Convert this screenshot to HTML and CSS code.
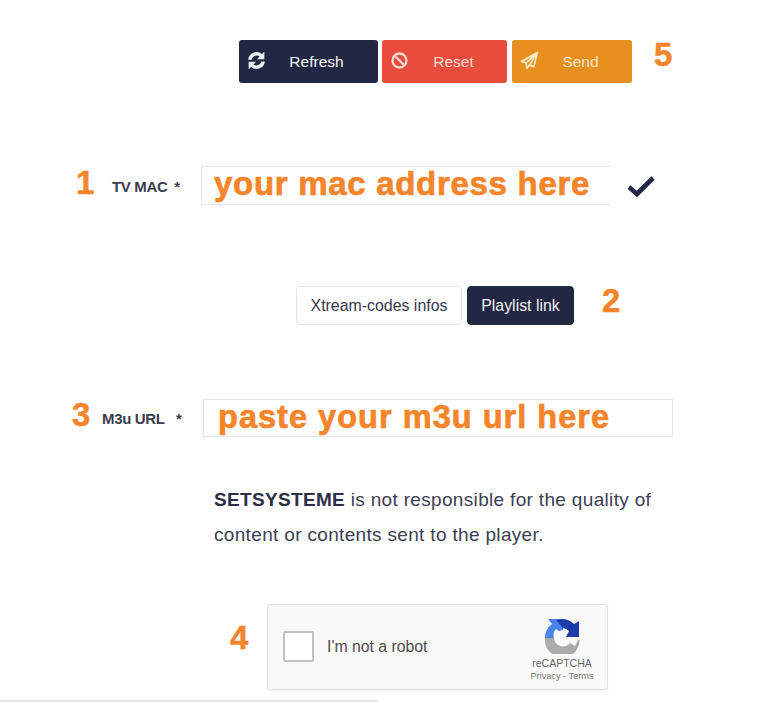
FILE: index.html
```html
<!DOCTYPE html>
<html lang="en">
<head>
    <meta charset="UTF-8">
    <meta name="viewport" content="width=device-width, initial-scale=1.0">
    <title>Upload playlist</title>
    <link rel="stylesheet" href="styles.css">
</head>
<body>
    <div class="page">
        <div class="actions">
            <button class="action action-refresh">
                <svg class="action-icon" viewBox="0 0 24 24"><path d="M2.5 11a9.5 9.5 0 0 1 15.6-6.3L21 2v8.5h-8.5l3-3A5.6 5.6 0 0 0 6.6 11zM21.5 13a9.5 9.5 0 0 1-15.6 6.3L3 22v-8.5h8.5l-3 3a5.6 5.6 0 0 0 8.9-3.5z" fill="#f1f1f4"/></svg>
                <span class="action-text">Refresh</span>
            </button>
            <button class="action action-reset">
                <svg class="action-icon" viewBox="0 0 24 24"><circle cx="12" cy="12" r="8" fill="none" stroke="#f8d9d2" stroke-width="2.6"/><path d="M6.5 6.5l11 11" stroke="#f8d9d2" stroke-width="2.6"/></svg>
                <span class="action-text">Reset</span>
            </button>
            <button class="action action-send">
                <svg class="action-icon" viewBox="0 0 24 24"><path d="M21 3L3 13l5 2 1 6 3-4 5 2zM8 15l13-12-9 14" fill="none" stroke="#fbe6c4" stroke-width="2" stroke-linejoin="round"/></svg>
                <span class="action-text">Send</span>
            </button>
            <span class="step step-five">5</span>
        </div>

        <div class="field field-mac">
            <span class="step step-one">1</span>
            <label class="field-label label-mac">TV MAC <span class="star-mac">*</span></label>
            <div class="fake-input input-mac">your mac address here</div>
            <svg class="check" viewBox="0 0 30 24"><path d="M3 13l8 7L27 4" fill="none" stroke="#222743" stroke-width="4.6"/></svg>
        </div>

        <div class="tabs">
            <button class="tab">Xtream-codes infos</button>
            <button class="tab tab-active">Playlist link</button>
            <span class="step step-two">2</span>
        </div>

        <div class="field field-url">
            <span class="step step-three">3</span>
            <label class="field-label label-url">M3u URL <span class="star">*</span></label>
            <div class="fake-input input-url">paste your m3u url here</div>
        </div>

        <p class="notice"><strong>SETSYSTEME</strong> is not responsible for the quality of content or contents sent to the player.</p>

        <div class="captcha-row">
            <span class="step step-four">4</span>
            <div class="captcha">
                <span class="captcha-box"></span>
                <span class="captcha-text">I'm not a robot</span>
                <div class="captcha-brand">
                    <svg class="captcha-logo" viewBox="0 0 36 36">
                        <path d="M6 34A17 17 0 0 1 1 20h9a9 9 0 0 0 16 5l5 3 3-6h1.500A17 17 0 0 1 6 34z" fill="#ababab"/>
                        <path d="M1 20A17 17 0 0 1 8 6L4 1h15v11l-4 1-3-2a9 9 0 0 0-2 9z" fill="#4a84e8"/>
                        <path d="M12 2L19 1a17 17 0 0 1 11 5l5-3v16H22l3-6a9 9 0 0 0-6-3z" fill="#1c3aa9"/>
                    </svg>
                    <span class="captcha-name">reCAPTCHA</span>
                    <span class="captcha-links">Privacy - Terms</span>
                </div>
            </div>
        </div>

        <div class="bottom-line"></div>
    </div>
</body>
</html>
```

FILE: styles.css
```css
* {
    box-sizing: border-box;
}

body {
    margin: 0;
    background-color: #fff;
    font-family: "Liberation Sans", Arial, sans-serif;
    color: #33374d;
}

.page {
    width: 780px;
    height: 702px;
    overflow: hidden;
    padding-top: 40px;
}

.step {
    font-size: 33px;
    line-height: 33px;
    font-weight: bold;
    color: #f5852b;
    -webkit-text-stroke: 0.5px #f5852b;
}

.actions {
    display: flex;
    height: 43px;
    margin-left: 239px;
}

.action {
    display: flex;
    align-items: center;
    height: 43px;
    padding: 0 0 0 7px;
    border: none;
    border-radius: 3px;
    font-family: inherit;
    font-size: 15.5px;
    color: #f4f4f6;
}

.action-icon {
    width: 21px;
    height: 21px;
    margin-top: -3px;
    flex: none;
}

.action-text {
    flex: 1;
    text-align: center;
}

.action-refresh {
    width: 139px;
    margin-right: 4px;
    background-color: #222743;
}

.action-refresh .action-text {
    padding-right: 12px;
}

.action-reset {
    width: 125px;
    margin-right: 5px;
    background-color: #e84c3d;
    color: #f9dcd5;
}

.action-reset .action-text {
    padding-right: 10px;
}

.action-send {
    width: 120px;
    background-color: #e78f1f;
    color: #fbe6c4;
}

.action-send .action-text {
    padding-right: 11px;
}

.step-five {
    margin: -2px 0 0 22px;
}

.field {
    display: flex;
    align-items: center;
}

.field-mac {
    height: 39px;
    margin-top: 83px;
    padding-left: 76px;
}

.step-one {
    width: 36px;
    margin-top: -6px;
}

.field-label {
    font-size: 15px;
    font-weight: bold;
    letter-spacing: -0.35px;
    color: #3a3d4d;
}

.label-mac {
    width: 89px;
    margin-top: 1px;
}

.star-mac {
    margin-left: 3px;
}

.fake-input {
    display: flex;
    align-items: center;
    border: 1px solid #e6e6e8;
    font-weight: bold;
    color: #f5852b;
    -webkit-text-stroke: 0.7px #f5852b;
}

.input-mac {
    width: 409px;
    height: 39px;
    padding: 0 0 3px 12px;
    border-right: none;
    font-size: 33px;
    letter-spacing: 0.7px;
}

.check {
    width: 30px;
    height: 24px;
    margin: 1px 0 0 16px;
}

.tabs {
    display: flex;
    height: 39px;
    margin-top: 81px;
    margin-left: 296px;
}

.tab {
    width: 166px;
    height: 39px;
    padding: 0;
    border: 1px solid #e4e4e8;
    border-radius: 4px;
    background-color: #fff;
    font-family: inherit;
    font-size: 15.9px;
    color: #33374d;
}

.tab-active {
    width: 107px;
    margin-left: 5px;
    border-color: #222743;
    background-color: #222743;
    color: #f1f1f4;
}

.step-two {
    margin: -2px 0 0 28px;
}

.field-url {
    height: 38px;
    margin-top: 74px;
    padding-left: 72px;
}

.step-three {
    width: 30px;
    margin-top: -8px;
}

.label-url {
    width: 101px;
}

.star {
    margin-left: 8px;
}

.input-url {
    width: 470px;
    height: 38px;
    padding: 0 0 2px 14px;
    font-size: 32.5px;
    letter-spacing: 1.03px;
}

.notice {
    width: 445px;
    margin: 45px 0 0 214px;
    font-size: 19px;
    letter-spacing: 0.33px;
    line-height: 35px;
    color: #3c4054;
}

.notice strong {
    color: #2a2e47;
}

.captcha-row {
    display: flex;
    margin-top: 52px;
    margin-left: 230px;
}

.step-four {
    width: 37px;
    margin-top: 17px;
}

.captcha {
    display: flex;
    align-items: center;
    width: 341px;
    height: 86px;
    padding: 0 14px 0 15px;
    border: 1px solid #e3e3e3;
    border-radius: 3px;
    background-color: #f9f9f9;
    box-shadow: 0 1px 3px rgba(0, 0, 0, 0.08);
}

.captcha-box {
    width: 31px;
    height: 31px;
    margin-top: -2px;
    border: 2px solid #c1c1c1;
    border-radius: 2px;
    background-color: #fff;
}

.captcha-text {
    flex: 1;
    margin: -1px 0 0 13px;
    font-size: 15.8px;
    color: #4c4c4c;
}

.captcha-brand {
    display: flex;
    flex-direction: column;
    align-items: center;
    width: 62px;
    margin-top: 5px;
}

.captcha-logo {
    width: 36px;
    height: 36px;
}

.captcha-name {
    margin-top: 3px;
    font-size: 10.5px;
    color: #666;
}

.captcha-links {
    margin-top: 2px;
    font-size: 9.2px;
    white-space: nowrap;
    color: #777;
}

.bottom-line {
    width: 378px;
    height: 2px;
    margin-top: 10px;
    background-color: #e4e4e4;
}
```
